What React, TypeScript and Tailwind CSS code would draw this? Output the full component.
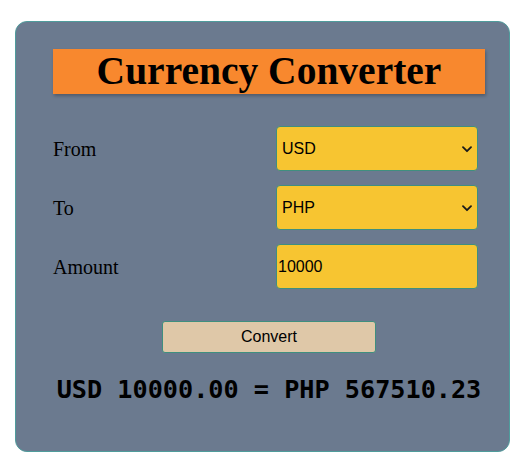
import React, { useState } from 'react';

const rates: Record<string, number> = { USD: 1, PHP: 56.751023, EUR: 0.92, JPY: 151.2 };

function Chevron() {
  return (
    <svg className="absolute right-[6px] top-[20px] pointer-events-none" width="10" height="7" viewBox="0 0 10 7" fill="none">
      <polyline points="1,1.2 5,5.2 9,1.2" stroke="#1a1a1a" strokeWidth="1.8" strokeLinecap="round" strokeLinejoin="round" />
    </svg>
  );
}

function App() {
  const [from, setFrom] = useState<string>('USD');
  const [to, setTo] = useState<string>('PHP');
  const [amount, setAmount] = useState<string>('10000');
  const [result, setResult] = useState<string>('USD 10000.00 = PHP 567510.23');

  const convert = () => {
    const value = parseFloat(amount) || 0;
    const out = (value / rates[from]) * rates[to];
    setResult(`${from} ${value.toFixed(2)} = ${to} ${out.toFixed(2)}`);
  };

  return (
    <div className="min-h-[472px] bg-white pt-[21px] pl-[15px]">
      <div className="w-[495px] h-[431px] rounded-[12px] border border-[#4f9c9c] bg-[#6b7a8f] pt-[27px] pl-[37px]">
        <h1 className="w-[432px] h-[45px] bg-[#f8882e] shadow-[1px_2px_3px_rgba(0,0,0,0.25)] flex items-center justify-center text-[39.5px] leading-none font-bold text-black" style={{ fontFamily: '"Liberation Serif", serif' }}>
          Currency Converter
        </h1>

        <div className="mt-[32px] flex flex-col gap-[14px]">
          <div className="flex items-center h-[45px]">
            <label className="w-[223px] text-[20px] text-black" style={{ fontFamily: '"Liberation Serif", serif' }}>From</label>
            <div className="relative w-[202px] h-[45px]">
              <select
                value={from}
                onChange={e => setFrom(e.target.value)}
                className="appearance-none w-full h-full rounded-[4px] border border-[#3f8f7f] bg-[#f7c531] pl-[5px] text-[16px] text-black outline-none"
                style={{ fontFamily: '"Liberation Sans", Arial, sans-serif' }}
              >
                {Object.keys(rates).map(c => <option key={c} value={c}>{c}</option>)}
              </select>
              <Chevron />
            </div>
          </div>

          <div className="flex items-center h-[45px]">
            <label className="w-[223px] text-[20px] text-black" style={{ fontFamily: '"Liberation Serif", serif' }}>To</label>
            <div className="relative w-[202px] h-[45px]">
              <select
                value={to}
                onChange={e => setTo(e.target.value)}
                className="appearance-none w-full h-full rounded-[4px] border border-[#3f8f7f] bg-[#f7c531] pl-[5px] text-[16px] text-black outline-none"
                style={{ fontFamily: '"Liberation Sans", Arial, sans-serif' }}
              >
                {Object.keys(rates).map(c => <option key={c} value={c}>{c}</option>)}
              </select>
              <Chevron />
            </div>
          </div>

          <div className="flex items-center h-[45px]">
            <label className="w-[223px] text-[20px] text-black" style={{ fontFamily: '"Liberation Serif", serif' }}>Amount</label>
            <input
              type="text"
              value={amount}
              onChange={e => setAmount(e.target.value)}
              className="w-[202px] h-[45px] rounded-[4px] border border-[#3f8f7f] bg-[#f7c531] pl-[1px] text-[16px] text-black outline-none"
              style={{ fontFamily: '"Liberation Sans", Arial, sans-serif' }}
            />
          </div>
        </div>

        <button
          onClick={convert}
          className="ml-[109px] mt-[32px] w-[214px] h-[32px] rounded-[3px] border border-[#3f8f7f] bg-[#dfc8a8] text-[16px] text-black"
          style={{ fontFamily: '"Liberation Sans", Arial, sans-serif' }}
        >
          Convert
        </button>

        <p className="mt-[18px] w-[432px] text-center text-[25.2px] font-bold text-black" style={{ fontFamily: '"DejaVu Sans Mono", monospace' }}>
          {result}
        </p>
      </div>
    </div>
  );
}

export default App;
